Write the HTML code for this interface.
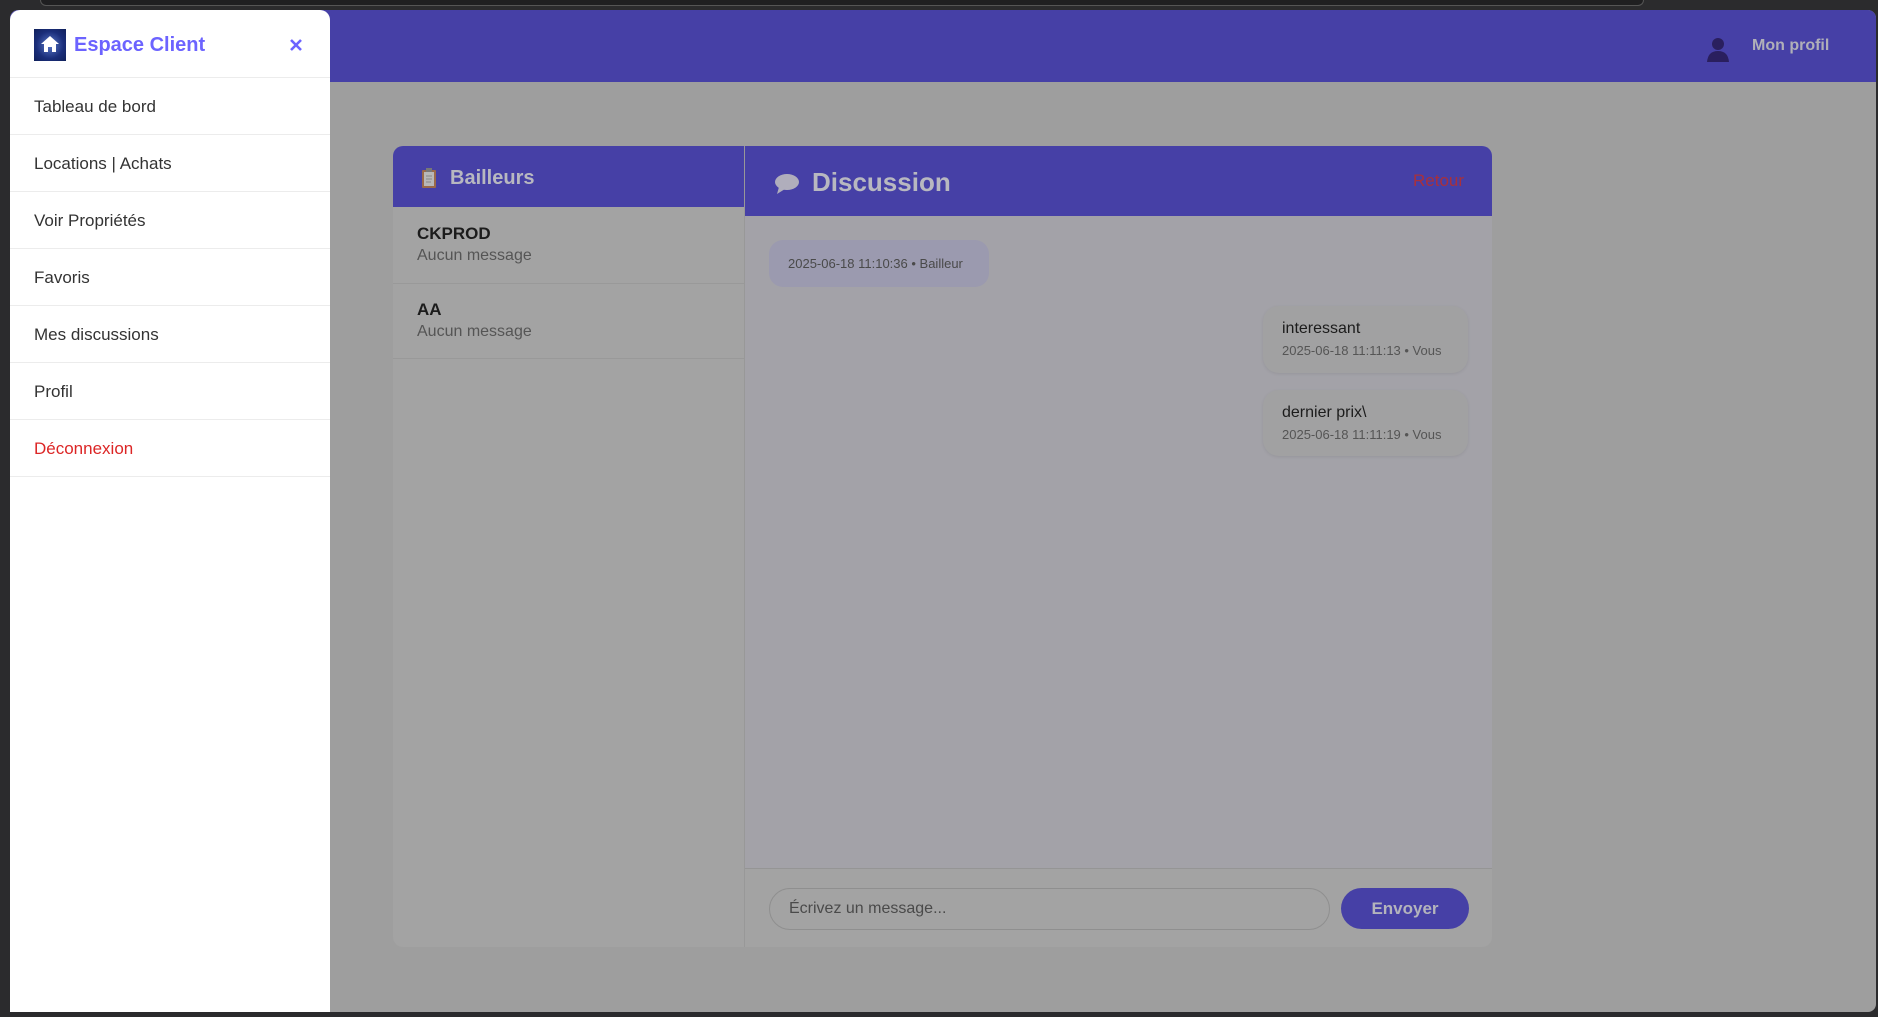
<!DOCTYPE html>
<html><head><meta charset="utf-8"><style>
*{box-sizing:border-box;margin:0;padding:0}
body{width:1878px;height:1017px;background:#2b2b2d;font-family:"Liberation Sans",sans-serif;position:relative;overflow:hidden}
.a{position:absolute}
.win{left:10px;top:10px;width:1866px;height:1002px;background:#9e9e9e;border-radius:8px;overflow:hidden}
.hdr{left:0;top:0;width:1866px;height:72px;background:#4640a6}
.side{left:10px;top:10px;width:320px;height:1002px;background:#fff;border-radius:10px 10px 0 0}
.mi{position:absolute;left:0;width:320px;height:57px;border-bottom:1px solid #ececec;font-size:17px;color:#333;padding-left:24px;line-height:57px}
.t{white-space:nowrap}
</style></head><body>
<div class="a" style="left:40px;top:0;width:1604px;height:6px;background:#1f1f21;border-radius:0 0 12px 12px;border:1px solid #555;border-top:none"></div>
<div class="a win">
 <div class="a hdr"></div>
 <svg class="a" style="left:1696px;top:26px" width="24" height="26" viewBox="0 0 24 26"><circle cx="12" cy="8" r="6" fill="#2a1f5e"/><path d="M1 26 Q2 15 12 15 Q22 15 23 26Z" fill="#2a1f5e"/></svg>
 <div class="a t" style="left:1742px;top:27px;font-size:16px;font-weight:bold;color:#b0b0b8">Mon profil</div>
 <!-- card -->
 <div class="a" style="left:383px;top:136px;width:1099px;height:801px;background:#a3a3a3;border-radius:10px;overflow:hidden">
  <div class="a" style="left:0;top:0;width:351px;height:61px;background:#4640a6"></div>
  <svg class="a" style="left:28px;top:22px" width="16" height="20" viewBox="0 0 16 20"><rect x="1" y="2" width="14" height="18" rx="1" fill="#9a6a4a"/><rect x="3" y="4" width="10" height="14" fill="#b8b8b8"/><rect x="5" y="0" width="6" height="4" fill="#777"/><path d="M5 8h6M5 11h6M5 14h5" stroke="#888" stroke-width="1"/></svg>
  <div class="a t" style="left:57px;top:21px;font-size:20px;font-weight:bold;color:#b8b8c0">Bailleurs</div>
  <div class="a t" style="left:24px;top:78px;font-size:17px;font-weight:bold;color:#1c1c1c">CKPROD</div>
  <div class="a t" style="left:24px;top:101px;font-size:16px;color:#555">Aucun message</div>
  <div class="a" style="left:0;top:137px;width:351px;height:1px;background:#999"></div>
  <div class="a t" style="left:24px;top:154px;font-size:17px;font-weight:bold;color:#1c1c1c">AA</div>
  <div class="a t" style="left:24px;top:177px;font-size:16px;color:#555">Aucun message</div>
  <div class="a" style="left:0;top:212px;width:351px;height:1px;background:#999"></div>
  <div class="a" style="left:351px;top:0;width:1px;height:801px;background:#989898"></div>
  <!-- chat -->
  <div class="a" style="left:352px;top:0;width:747px;height:70px;background:#4640a6"></div>
  <svg class="a" style="left:381px;top:27px" width="26" height="22" viewBox="0 0 26 22"><ellipse cx="13" cy="9" rx="12" ry="8" fill="#b0aebc"/><path d="M5 14 L3 21 L11 16Z" fill="#b0aebc"/></svg>
  <div class="a t" style="left:419px;top:21px;font-size:26px;font-weight:bold;color:#b8b8c0">Discussion</div>
  <div class="a t" style="left:1020px;top:25px;font-size:17px;color:#a8303c">Retour</div>
  <div class="a" style="left:352px;top:70px;width:747px;height:652px;background:#a3a2a8"></div>
  <div class="a t" style="left:376px;top:94px;width:220px;height:47px;background:#9b9aaf;border-radius:14px;font-size:13px;color:#4a4a4a;padding-left:19px;line-height:47px">2025-06-18 11:10:36 • Bailleur</div>
  <div class="a" style="left:870px;top:160px;width:205px;height:67px;background:#a1a1a2;border-radius:16px;box-shadow:0 1px 3px rgba(0,0,0,.08)">
   <div class="a t" style="left:19px;top:14px;font-size:16px;color:#1c1c1c">interessant</div>
   <div class="a t" style="left:19px;top:37px;font-size:13px;color:#555">2025-06-18 11:11:13 • Vous</div>
  </div>
  <div class="a" style="left:870px;top:244px;width:205px;height:66px;background:#a1a1a2;border-radius:16px;box-shadow:0 1px 3px rgba(0,0,0,.08)">
   <div class="a t" style="left:19px;top:14px;font-size:16px;color:#1c1c1c">dernier prix\</div>
   <div class="a t" style="left:19px;top:37px;font-size:13px;color:#555">2025-06-18 11:11:19 • Vous</div>
  </div>
  <div class="a" style="left:352px;top:722px;width:747px;height:1px;background:#959595"></div>
  <div class="a t" style="left:376px;top:742px;width:561px;height:42px;border:1px solid #8f8f8f;border-radius:21px;font-size:16px;color:#4a4a4a;padding-left:19px;line-height:40px">Écrivez un message...</div>
  <div class="a t" style="left:948px;top:742px;width:128px;height:41px;background:#4640a6;border-radius:21px;font-size:17px;font-weight:bold;color:#b4b4bc;text-align:center;line-height:41px">Envoyer</div>
 </div>
</div>
<div class="a side">
 <div class="a" style="left:24px;top:19px;width:32px;height:32px;background:radial-gradient(circle,#5a78c8 0%,#1a2e7a 60%,#10205a 100%)"></div>
 <svg class="a" style="left:29px;top:23px" width="22" height="22" viewBox="0 0 22 22"><path d="M11 3 L2 11 H5 V19 H9 V14 H13 V19 H17 V11 H20Z" fill="#fff"/></svg>
 <div class="a t" style="left:64px;top:24px;font-size:20px;font-weight:bold;color:#6c63ff">Espace Client</div>
 <svg class="a" style="left:279px;top:28px" width="14" height="14" viewBox="0 0 14 14"><path d="M2 2L12 12M12 2L2 12" stroke="#6c63ff" stroke-width="2.6"/></svg>
 <div class="a" style="left:0;top:67px;width:320px;height:1px;background:#ececec"></div>
 <div class="mi" style="top:68px">Tableau de bord</div>
 <div class="mi" style="top:125px">Locations | Achats</div>
 <div class="mi" style="top:182px">Voir Propriétés</div>
 <div class="mi" style="top:239px">Favoris</div>
 <div class="mi" style="top:296px">Mes discussions</div>
 <div class="mi" style="top:353px">Profil</div>
 <div class="mi" style="top:410px;color:#dc2626">Déconnexion</div>
</div>
</body></html>
